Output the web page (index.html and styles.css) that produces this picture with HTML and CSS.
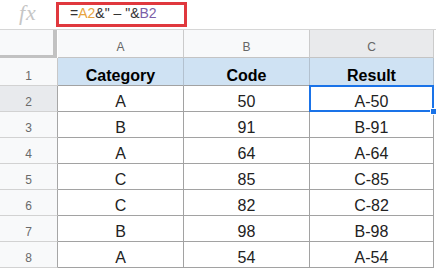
FILE: index.html
```html
<!DOCTYPE html>
<html lang="en">
<head>
<meta charset="utf-8">
<title>Sheet</title>
<link rel="stylesheet" href="styles.css">
</head>
<body>
<div class="sheet">
  <div class="formula-bar">
    <div class="fx">fx</div>
    <div class="formula"><span>=</span><span class="ref-a">A2</span><span>&amp;"&nbsp;–&nbsp;"&amp;</span><span class="ref-b">B2</span></div>
  </div>
  <div class="grid">
    <div class="corner"></div>
    <div class="col-head">A</div>
    <div class="col-head">B</div>
    <div class="col-head active">C</div>
    <div class="pad"></div>

    <div class="row-head first">1</div>
    <div class="cell title">Category</div>
    <div class="cell title">Code</div>
    <div class="cell title">Result</div>
    <div class="pad"></div>

    <div class="row-head active">2</div>
    <div class="cell">A</div>
    <div class="cell">50</div>
    <div class="cell selected">A-50<div class="sel"><div class="handle"></div></div></div>
    <div class="pad"></div>

    <div class="row-head">3</div>
    <div class="cell">B</div>
    <div class="cell">91</div>
    <div class="cell">B-91</div>
    <div class="pad"></div>

    <div class="row-head">4</div>
    <div class="cell">A</div>
    <div class="cell">64</div>
    <div class="cell">A-64</div>
    <div class="pad"></div>

    <div class="row-head">5</div>
    <div class="cell">C</div>
    <div class="cell">85</div>
    <div class="cell">C-85</div>
    <div class="pad"></div>

    <div class="row-head">6</div>
    <div class="cell">C</div>
    <div class="cell">82</div>
    <div class="cell">C-82</div>
    <div class="pad"></div>

    <div class="row-head">7</div>
    <div class="cell">B</div>
    <div class="cell">98</div>
    <div class="cell">B-98</div>
    <div class="pad"></div>

    <div class="row-head">8</div>
    <div class="cell">A</div>
    <div class="cell">54</div>
    <div class="cell">A-54</div>
    <div class="pad"></div>
  </div>
</div>
</body>
</html>
```
FILE: styles.css
```css
* {
  box-sizing: border-box;
}

html, body {
  margin: 0;
  padding: 0;
  background: #ffffff;
}

body {
  font-family: "Liberation Sans", Arial, sans-serif;
  color: #222222;
}

.sheet {
  width: 436px;
  height: 269px;
  overflow: hidden;
}

.formula-bar {
  display: flex;
  height: 30px;
  border-bottom: 1px solid #d6d6d6;
}

.fx {
  width: 56px;
  padding-left: 19px;
  font-family: "Liberation Serif", "Times New Roman", serif;
  font-style: italic;
  font-size: 22px;
  line-height: 25px;
  letter-spacing: 1px;
  color: #c6c6c6;
}

.formula {
  margin-top: 2px;
  width: 131px;
  height: 25px;
  border: 3px solid #e0383e;
  padding: 0 0 3px 11px;
  font-size: 14px;
  line-height: 16px;
  color: #333333;
  white-space: nowrap;
}

.ref-a {
  color: #e8a33d;
}

.ref-b {
  color: #7b5ea7;
}

.grid {
  display: grid;
  grid-template-columns: 58px 126px 126px 124px 2px;
  grid-template-rows: 28px 28px repeat(7, 26px);
}

.corner {
  background: #f8f9fa;
  margin-right: 1px;
  border-right: 4px solid #c2c2c2;
  border-bottom: 3px solid #c2c2c2;
}

.col-head {
  background: #f8f9fa;
  border-right: 1px solid #cbcbcb;
  border-bottom: 1px solid #c4c4c4;
  display: flex;
  align-items: flex-end;
  justify-content: center;
  padding-bottom: 3px;
  font-size: 12px;
  line-height: 14px;
  color: #666666;
}

.col-head.active {
  background: #e9eaec;
}

.row-head {
  background: #f8f9fa;
  border-right: 1px solid #a6a6a6;
  border-bottom: 1px solid #d2d2d2;
  display: flex;
  align-items: flex-end;
  justify-content: center;
  padding-bottom: 2px;
  font-size: 12px;
  line-height: 14px;
  color: #6a6a6a;
}

.row-head.first {
  border-right-color: #c8c8c8;
}

.row-head.active {
  background: #e8eaed;
}

.cell {
  border-right: 1px solid #a2a2a2;
  border-bottom: 1px solid #a2a2a2;
  display: flex;
  align-items: flex-end;
  justify-content: center;
  font-size: 16px;
  line-height: 19px;
  color: #222222;
}

.cell.title {
  background: #cfe2f3;
  border-right-color: #b3c1cf;
  font-weight: bold;
  color: #000000;
}

.pad {
  background: #ffffff;
}

.selected {
  position: relative;
}

.sel {
  position: absolute;
  left: -1px;
  top: -1px;
  right: -1px;
  bottom: -1px;
  border: 2px solid #1a73e8;
}

.handle {
  position: absolute;
  right: -5px;
  bottom: -5px;
  width: 7px;
  height: 7px;
  background: #1a73e8;
  border: 1px solid #ffffff;
}
```
